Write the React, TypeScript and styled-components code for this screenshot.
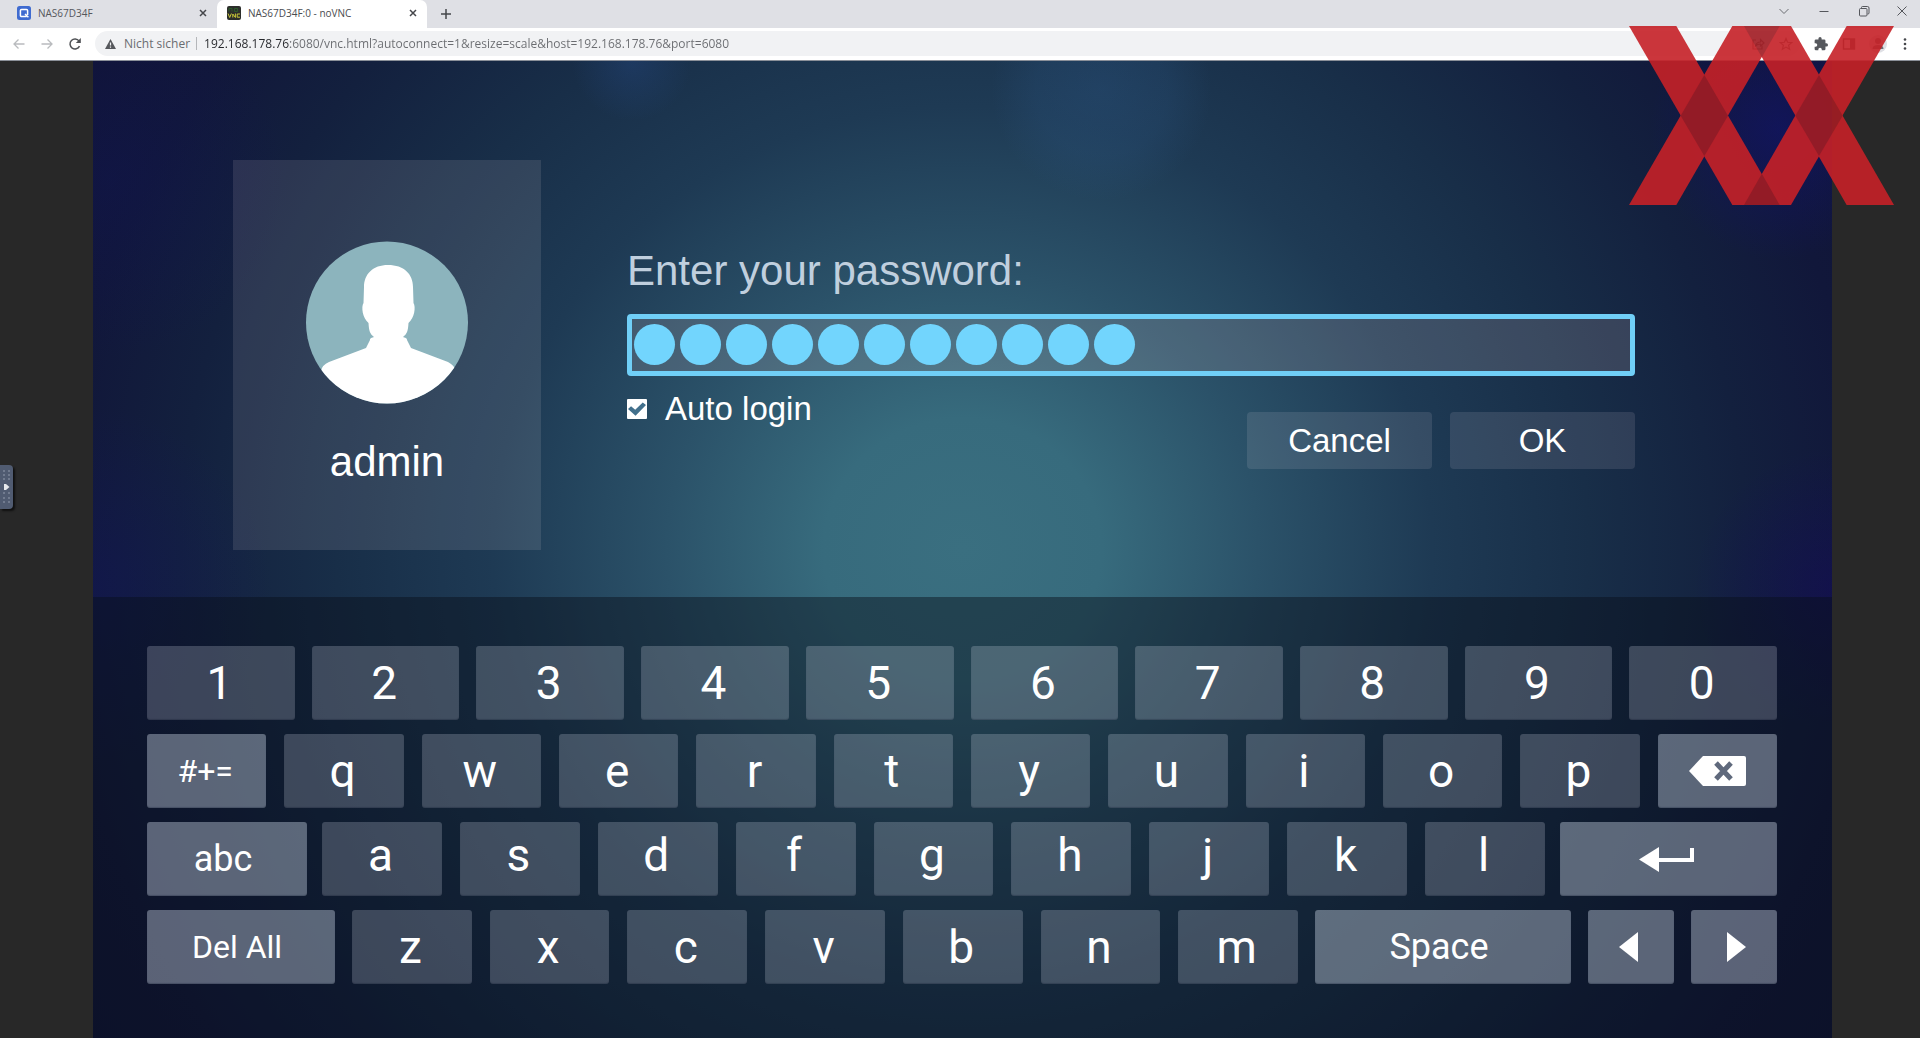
import React, { useState } from 'react';
import styled, { createGlobalStyle } from 'styled-components';

const chromeFont = '"Open Sans", "Noto Sans", sans-serif';
const dialogFont = '"Liberation Sans", Arial, sans-serif';
const keyFont = 'Roboto, "Noto Sans", sans-serif';

const GlobalStyle = createGlobalStyle`
  * { box-sizing: border-box; }
  html, body { margin: 0; padding: 0; background: #282828; }
  button, input { font: inherit; color: inherit; border: 0; padding: 0; margin: 0; background: none; }
  button { cursor: pointer; }
  svg { display: block; }
`;

const Browser = styled.div`
  position: relative;
  display: flex;
  flex-direction: column;
  min-height: 100vh;
  overflow: hidden;
  font-family: ${chromeFont};
  font-size: 12px;
`;

/* ---------- browser chrome ---------- */

const TabStrip = styled.header`
  display: flex;
  align-items: stretch;
  height: 28px;
  background: #dfe0e5;
`;

const Tab = styled.div<{ $active?: boolean }>`
  display: flex;
  align-items: center;
  gap: 7px;
  width: ${(p) => (p.$active ? '210px' : '217px')};
  padding: 0 7px 2px ${(p) => (p.$active ? '10px' : '17px')};
  border-radius: 7px 7px 0 0;
  background: ${(p) => (p.$active ? '#ffffff' : 'transparent')};
  color: ${(p) => (p.$active ? '#4a4c50' : '#55575c')};
  font-size: 10px;
`;

const TabTitle = styled.span`
  flex: 1;
  white-space: nowrap;
`;

const IconButton = styled.button<{ $width?: number; $color?: string }>`
  display: flex;
  flex: none;
  align-items: center;
  justify-content: center;
  width: ${(p) => p.$width ?? 14}px;
  color: ${(p) => p.$color ?? '#45474b'};
`;

const WindowControls = styled.div`
  display: flex;
  margin-left: auto;
  padding-bottom: 6px;
`;

const Toolbar = styled.div`
  display: flex;
  align-items: center;
  height: 33px;
  padding: 0 3px 1px 5px;
  background: #ffffff;
  border-bottom: 1px solid #8b9099;
`;

const AddressBar = styled.div`
  display: flex;
  flex: 1;
  align-items: center;
  height: 25px;
  margin: 0 7px 0 6px;
  padding-left: 10px;
  border-radius: 13px;
  background: #f1f2f4;
  color: #6a6c70;
`;

const SiteInfo = styled.button`
  display: flex;
  align-items: center;
  gap: 8px;
  padding-right: 6px;
  border-right: 1px solid #b5b7ba;
  line-height: 13px;
  white-space: nowrap;
`;

const AddressInput = styled.input`
  flex: 1;
  height: 20px;
  margin-left: 7px;
  color: transparent;
  background: linear-gradient(90deg, #25272b 86px, #6a6c70 86px);
  background-clip: text;
  -webkit-background-clip: text;
  outline: none;
`;

/* ---------- remote desktop ---------- */

const Viewport = styled.main`
  display: flex;
  flex: 1;
  padding: 0 88px 0 93px;
  background: #282828;
`;

const Desktop = styled.div`
  display: flex;
  flex: 1;
  flex-direction: column;
  background:
    radial-gradient(circle 60px at 31% 0, rgba(40, 80, 150, 0.3), transparent),
    radial-gradient(circle 110px at 58% 3%, rgba(45, 90, 140, 0.3), rgba(45, 90, 140, 0.2) 60%, transparent),
    radial-gradient(circle 130px at 97% 7%, rgba(18, 20, 110, 0.6), transparent),
    radial-gradient(circle 140px at 100% 54%, rgba(20, 6, 100, 0.4), transparent),
    radial-gradient(circle 180px at 0 54%, rgba(18, 20, 100, 0.35), transparent),
    radial-gradient(circle 180px at 1% 12%, rgba(16, 20, 90, 0.3), transparent),
    radial-gradient(ellipse 50% 84% at 50% 50%, #3a6f80 0%, #376b7d 16%, #2b5269 34%, #1e3a54 54%, #182e48 72%, #13203e 90%, #11173a 104%, #0f1135 130%);
`;

const LoginArea = styled.section`
  display: flex;
  gap: 86px;
  height: 536px;
  padding: 99px 197px 0 140px;
  font-family: ${dialogFont};
  color: #ffffff;
`;

const UserCard = styled.div`
  display: flex;
  flex: 0 0 308px;
  flex-direction: column;
  align-items: center;
  gap: 34px;
  height: 390px;
  padding-top: 81px;
  background: rgba(255, 235, 240, 0.11);
  font-size: 42px;
  line-height: 48px;
`;

const LoginForm = styled.form`
  flex: 1;
  padding-top: 87px;
`;

const PasswordLabel = styled.label`
  display: block;
  margin-bottom: 19px;
  color: #c0cfde;
  font-size: 42px;
  line-height: 48px;
`;

const PasswordField = styled.div`
  display: grid;
  height: 62px;
  border: 5px solid #70cff7;
  border-radius: 4px;
  background: rgba(255, 225, 225, 0.15);
  > * { grid-area: 1 / 1; }
`;

const PasswordInput = styled.input`
  color: transparent;
  outline: none;
`;

const Dots = styled.div`
  display: flex;
  align-items: center;
  gap: 5px;
  padding: 0 0 2px 2px;
  pointer-events: none;
`;

const Dot = styled.span`
  width: 41px;
  height: 41px;
  border-radius: 50%;
  background: #72d5fd;
`;

const FormFooter = styled.div`
  display: flex;
  justify-content: space-between;
  padding-top: 13px;
  font-size: 33px;
  line-height: 40px;
`;

const AutoLogin = styled.label`
  display: flex;
  align-items: center;
  gap: 18px;
  height: 40px;
`;

const CheckBox = styled.input`
  display: grid;
  place-items: center;
  width: 20px;
  height: 20px;
  border-radius: 1px;
  background: #ffffff;
  appearance: none;
  &:checked::before {
    content: '';
    width: 18px;
    height: 14px;
    background: #42708c;
    clip-path: polygon(0 50%, 17% 30%, 40% 55%, 82% 4%, 100% 22%, 42% 98%);
  }
`;

const Actions = styled.div`
  display: flex;
  gap: 18px;
  padding-top: 23px;
`;

const ActionButton = styled.button`
  width: 185px;
  height: 57px;
  border-radius: 4px;
  background: rgba(255, 240, 245, 0.11);
`;

/* ---------- on-screen keyboard ---------- */

const Keyboard = styled.section`
  display: flex;
  flex: 1;
  flex-direction: column;
  gap: 14px;
  padding: 49px 55px 53px 54px;
  background: rgba(9, 16, 26, 0.46);
  font-family: ${keyFont};
  color: #ffffff;
`;

const KeyRow = styled.div<{ $gap: number }>`
  display: flex;
  gap: ${(p) => p.$gap}px;
`;

const KeyGroup = styled.div<{ $grow: number }>`
  display: flex;
  flex: ${(p) => p.$grow} 1 0;
  gap: 18px;
`;

const Key = styled.button<{ $grow?: number; $size?: number; $special?: boolean; $raised?: boolean }>`
  display: flex;
  flex: ${(p) => p.$grow ?? 120} 1 0;
  align-items: center;
  justify-content: center;
  min-width: 0;
  height: 74px;
  padding-bottom: ${(p) => (p.$raised ? '8px' : '0')};
  border-radius: 3px;
  background: ${(p) => (p.$special ? 'rgba(230, 240, 255, 0.36)' : 'rgba(232, 236, 252, 0.215)')};
  box-shadow: inset 0 -1px 1px rgba(10, 20, 40, 0.25);
  font-size: ${(p) => p.$size ?? 46}px;
  line-height: 54px;
`;

const KeyLabel = styled.span<{ $wide?: boolean }>`
  padding-right: ${(p) => (p.$wide ? '8px' : '3px')};
`;

/* ---------- overlays ---------- */

const ControlHandle = styled.button`
  position: absolute;
  top: 465px;
  left: 0;
  width: 13px;
  height: 44px;
  border-radius: 0 4px 4px 0;
  background: #505b71;
  box-shadow: 2px 2px 2px rgba(0, 0, 0, 0.6);
`;

const Watermark = styled.svg`
  position: absolute;
  top: 26px;
  right: 26px;
  pointer-events: none;
`;

const Stroke = ({ d, size = 14, width = 1.5 }: { d: string; size?: number; width?: number }) => (
  <svg width={size} height={size} viewBox="0 0 14 14" fill="none" stroke="currentColor" strokeWidth={width}>
    <path d={d} />
  </svg>
);

const CloseIcon = () => <Stroke d="M4 4l6 6M10 4l-6 6" />;

const QnapIcon = () => (
  <svg width="14" height="14" viewBox="0 0 14 14">
    <rect width="14" height="14" rx="2.500" fill="#3f6bd0" />
    <path d="M10.600 9V4.600a1.200 1.200 0 0 0-1.200-1.200H4.600a1.200 1.200 0 0 0-1.200 1.200v4.800a1.200 1.200 0 0 0 1.200 1.200h5M8 8l3.400 3.200" fill="none" stroke="#fff" strokeWidth="1.500" />
  </svg>
);

const VncIcon = () => (
  <svg width="14" height="14" viewBox="0 0 14 14">
    <rect width="14" height="14" rx="2" fill="#2c2e2b" />
    <path d="M2 5.500V2.500h3v3M7.500 2.500h3v3h-3z" fill="none" stroke="#2b5a28" strokeWidth="1" />
    <path d="M1 7.500l1.700 4 1.700-4M5.800 11.500v-3.500l2.600 3.500v-4M13 8h-2.800v3.200H13" fill="none" stroke="#c9c838" strokeWidth="1" />
  </svg>
);

const AvatarIcon = () => (
  <svg width="163" height="163" viewBox="0 0 163 163">
    <defs>
      <clipPath id="avatar-disc"><circle cx="81" cy="81.500" r="81" /></clipPath>
    </defs>
    <circle cx="81" cy="81.500" r="81" fill="#8cb4bd" />
    <g clipPath="url(#avatar-disc)">
      <path
        fill="#fff"
        d="M82 24C67 24 58 33 58 46L57.500 62C55 66 56.500 77 62.500 82C63 90 64 93 68 96C64 97 64 98 64 99L60 107L23 121Q16 124 15 130V163H150V130Q149 125 142 121L105 107L101 99C101 98 101 97 97 96C101 93 102 90 102.500 82C108.500 77 110 66 107.500 62L107 46C107 33 98 24 82 24Z"
      />
    </g>
  </svg>
);

const BackspaceIcon = () => (
  <svg width="57" height="30" viewBox="0 0 57 30">
    <path d="M14 0H55Q57 0 57 2V28Q57 30 55 30H14L0 15Z" fill="#fff" />
    <path d="M27 7L42 23M42 7L27 23" stroke="#5f697c" strokeWidth="5" />
  </svg>
);

const EnterIcon = () => (
  <svg width="60" height="25" viewBox="0 0 60 25">
    <path d="M0 12.500L20 0V25Z" fill="#fff" />
    <path d="M18 13H53V1" fill="none" stroke="#fff" strokeWidth="4" />
  </svg>
);

const ArrowIcon = ({ right = false }: { right?: boolean }) => (
  <svg width="24" height="30" viewBox="0 0 24 30">
    <path d={right ? 'M5 0L24 15L5 30Z' : 'M19 0L0 15L19 30Z'} fill="#fff" />
  </svg>
);

const LogoMark = () => (
  <Watermark width="265" height="179" viewBox="88 78 795 537" opacity="0.9" aria-hidden="true">
    <g fill="#c62127">
      <path d="M88 78H230L540 615H398Z" />
      <path d="M398 78H540L230 615H88Z" />
      <path d="M433 78H574L883 615H741Z" />
      <path d="M741 78H883L574 615H433Z" />
    </g>
    <g fill="#a21c23">
      <path d="M314 225L385 347L314 468L243 347Z" />
      <path d="M658 225L729 347L658 468L587 347Z" />
      <path d="M433 78H540L486.500 172Z" />
      <path d="M433 615H540L486.500 521Z" />
    </g>
  </Watermark>
);

export default function App() {
  const [password, setPassword] = useState('password123');
  const [autoLogin, setAutoLogin] = useState(true);
  const type = (char: string) => setPassword((value) => value + char);

  const letters = (chars: string, raised = false) =>
    chars.split('').map((char) => (
      <Key key={char} type="button" $raised={raised} onClick={() => type(char)}>
        <KeyLabel>{char}</KeyLabel>
      </Key>
    ));

  return (
    <Browser>
      <GlobalStyle />
      <TabStrip>
        <Tab>
          <QnapIcon />
          <TabTitle>NAS67D34F</TabTitle>
          <IconButton aria-label="Close tab NAS67D34F"><CloseIcon /></IconButton>
        </Tab>
        <Tab $active>
          <VncIcon />
          <TabTitle>NAS67D34F:0 - noVNC</TabTitle>
          <IconButton aria-label="Close tab noVNC"><CloseIcon /></IconButton>
        </Tab>
        <IconButton $width={38} aria-label="New tab"><Stroke d="M7 2v10M2 7h10" /></IconButton>
        <WindowControls>
          <IconButton $width={40} $color="#6b6d72" aria-label="Search tabs"><Stroke d="M2.500 5l4.500 4.500L11.500 5" width={1} /></IconButton>
          <IconButton $width={40} $color="#55575c" aria-label="Minimize"><Stroke d="M2.500 7.500h9" width={1} /></IconButton>
          <IconButton $width={40} $color="#55575c" aria-label="Restore">
            <Stroke d="M4.500 4.500V3.500a1 1 0 0 1 1-1h5a1.500 1.500 0 0 1 1.500 1.500v5a1 1 0 0 1-1 1h-.5M3.500 4.500h5.500a1 1 0 0 1 1 1v5.500a1 1 0 0 1-1 1h-5.500a1 1 0 0 1-1-1V5.500a1 1 0 0 1 1-1z" width={1} />
          </IconButton>
          <IconButton $width={36} $color="#55575c" aria-label="Close window"><Stroke d="M2.500 2.500l9 9M11.500 2.500l-9 9" width={1} /></IconButton>
        </WindowControls>
      </TabStrip>

      <Toolbar>
        <IconButton $width={28} $color="#b9bbbe" aria-label="Back"><Stroke d="M12.500 7H2M6.500 2.500L2 7l4.500 4.500" width={1.3} /></IconButton>
        <IconButton $width={28} $color="#b9bbbe" aria-label="Forward"><Stroke d="M1.500 7H12M7.500 2.500L12 7l-4.500 4.500" width={1.3} /></IconButton>
        <IconButton $width={28} $color="#505256" aria-label="Reload">
          <svg width="14" height="14" viewBox="0 0 14 14" fill="none" stroke="currentColor" strokeWidth="1.500">
            <path d="M11.500 9.200A5 5 0 1 1 11 3.900" />
            <path d="M12.800 1v5h-5z" fill="currentColor" stroke="none" />
          </svg>
        </IconButton>
        <AddressBar>
          <SiteInfo>
            <svg width="11" height="10" viewBox="0 0 11 10">
              <path d="M5.500 0L11 10H0Z" fill="#56585c" />
              <path d="M5.500 3.500v3M5.500 7.500v1.200" stroke="#f1f2f4" strokeWidth="1.200" />
            </svg>
            Nicht sicher
          </SiteInfo>
          <AddressInput
            aria-label="Address"
            defaultValue="192.168.178.76:6080/vnc.html?autoconnect=1&resize=scale&host=192.168.178.76&port=6080"
          />
          <IconButton $width={28} $color="#6a6c70" aria-label="Share">
            <Stroke d="M5 3H2v9h9V8.500M4.500 9C5 6 7 5 9.500 5V2.500L13 6 9.500 9V7C7.500 7 6 7.500 4.500 9z" width={1.2} />
          </IconButton>
          <IconButton $width={28} $color="#6a6c70" aria-label="Bookmark this page">
            <Stroke d="M7 1.500l1.600 3.800 4.100.3-3.100 2.700 1 4L7 10.100l-3.600 2.200 1-4L1.300 5.600l4.100-.3z" width={1.2} />
          </IconButton>
        </AddressBar>
        <IconButton $width={27} $color="#56585d" aria-label="Extensions">
          <svg width="14" height="14" viewBox="1 1 22 22" fill="currentColor">
            <path d="M20.500 11H19V7a2 2 0 0 0-2-2h-4V3.500a2.500 2.500 0 0 0-5 0V5H4a2 2 0 0 0-2 2v3.800h1.500a2.700 2.700 0 0 1 0 5.400H2V20a2 2 0 0 0 2 2h3.800v-1.500a2.700 2.700 0 0 1 5.400 0V22H17a2 2 0 0 0 2-2v-4h1.500a2.500 2.500 0 0 0 0-5z" />
          </svg>
        </IconButton>
        <IconButton $width={29} $color="#56585d" aria-label="Side panel">
          <svg width="14" height="14" viewBox="0 0 14 14">
            <rect x="1.500" y="2" width="11" height="10" fill="none" stroke="currentColor" strokeWidth="1.400" />
            <rect x="8" y="2" width="4.500" height="10" fill="currentColor" />
          </svg>
        </IconButton>
        <IconButton $width={29} $color="#6e7076" aria-label="Profile">
          <svg width="18" height="18" viewBox="0 0 18 18">
            <circle cx="9" cy="9" r="9" fill="#dfe0e5" />
            <circle cx="9" cy="6" r="3" fill="currentColor" />
            <path d="M3.500 14q0-4 5.500-4t5.500 4z" fill="currentColor" />
          </svg>
        </IconButton>
        <IconButton $width={25} $color="#45474b" aria-label="Menu">
          <svg width="4" height="14" viewBox="0 0 4 14" fill="currentColor">
            <circle cx="2" cy="2.500" r="1.300" /><circle cx="2" cy="7" r="1.300" /><circle cx="2" cy="11.500" r="1.300" />
          </svg>
        </IconButton>
      </Toolbar>

      <Viewport>
        <Desktop>
          <LoginArea>
            <UserCard>
              <AvatarIcon />
              admin
            </UserCard>
            <LoginForm onSubmit={(event) => event.preventDefault()}>
              <PasswordLabel htmlFor="password">Enter your password:</PasswordLabel>
              <PasswordField>
                <PasswordInput
                  id="password"
                  type="password"
                  value={password}
                  onChange={(event) => setPassword(event.target.value)}
                />
                <Dots aria-hidden="true">
                  {password.split('').map((_, index) => <Dot key={index} />)}
                </Dots>
              </PasswordField>
              <FormFooter>
                <AutoLogin>
                  <CheckBox type="checkbox" checked={autoLogin} onChange={(event) => setAutoLogin(event.target.checked)} />
                  Auto login
                </AutoLogin>
                <Actions>
                  <ActionButton type="button">Cancel</ActionButton>
                  <ActionButton type="submit">OK</ActionButton>
                </Actions>
              </FormFooter>
            </LoginForm>
          </LoginArea>

          <Keyboard aria-label="On-screen keyboard">
            <KeyRow $gap={17}>{letters('1234567890')}</KeyRow>
            <KeyRow $gap={18}>
              <Key $special $size={32}><KeyLabel>#+=</KeyLabel></Key>
              {letters('qwertyuiop')}
              <Key $special aria-label="Backspace" onClick={() => setPassword((value) => value.slice(0, -1))}><BackspaceIcon /></Key>
            </KeyRow>
            <KeyRow $gap={15}>
              <Key $special $grow={160} $size={36}><KeyLabel $wide>abc</KeyLabel></Key>
              <KeyGroup $grow={1223}>{letters('asdfghjkl', true)}</KeyGroup>
              <Key $special $grow={217} aria-label="Enter"><EnterIcon /></Key>
            </KeyRow>
            <KeyRow $gap={17}>
              <Key $special $grow={188} $size={32} onClick={() => setPassword('')}><KeyLabel $wide>Del All</KeyLabel></Key>
              <KeyGroup $grow={946}>{letters('zxcvbnm')}</KeyGroup>
              <Key $special $grow={256} $size={36} onClick={() => type(' ')}><KeyLabel $wide>Space</KeyLabel></Key>
              <Key $special $grow={86} aria-label="Cursor left"><ArrowIcon /></Key>
              <Key $special $grow={86} aria-label="Cursor right"><ArrowIcon right /></Key>
            </KeyRow>
          </Keyboard>
        </Desktop>
      </Viewport>

      <ControlHandle aria-label="Show control bar">
        <svg width="13" height="44" viewBox="0 0 13 44">
          <g fill="#7c869a">
            {[6, 10, 14, 28, 33, 37].map((y) => (
              <React.Fragment key={y}>
                <circle cx="4" cy={y} r="1" />
                <circle cx="9" cy={y} r="1" />
              </React.Fragment>
            ))}
          </g>
          <path d="M4 19h2l3.500 3L6 25H4z" fill="#e6e8ec" />
        </svg>
      </ControlHandle>
      <LogoMark />
    </Browser>
  );
}
